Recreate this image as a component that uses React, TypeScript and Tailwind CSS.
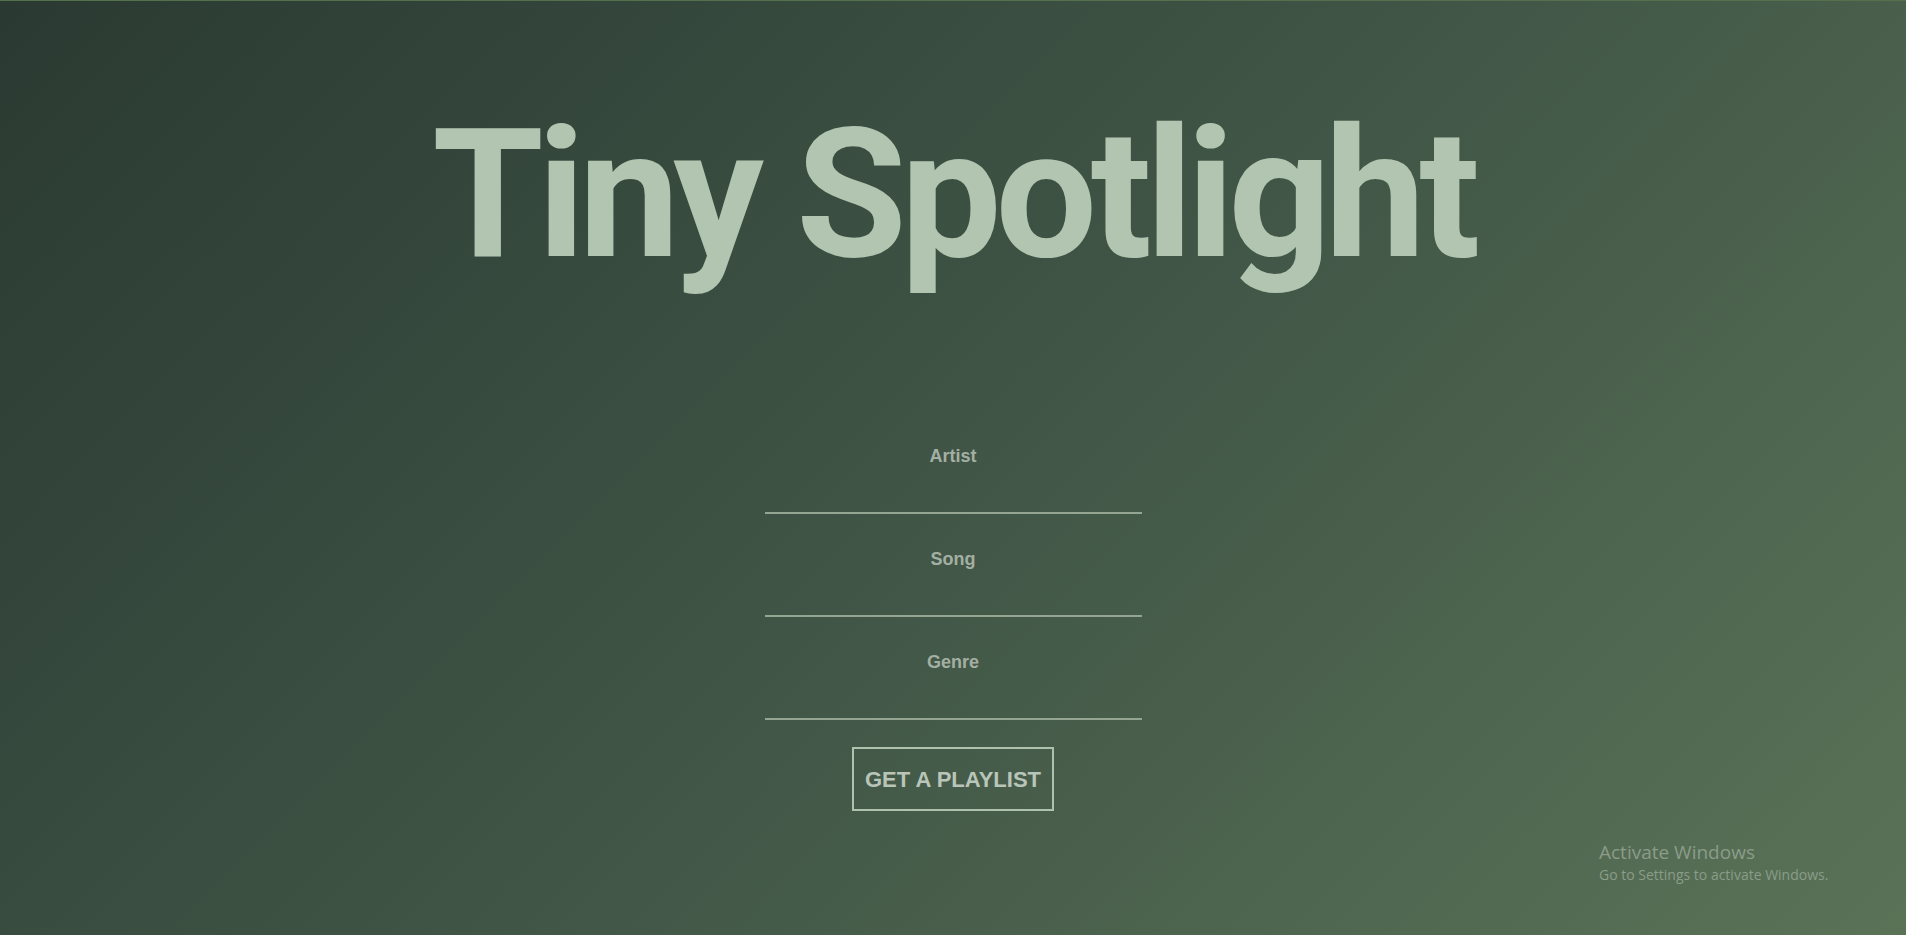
import { useState } from "react";

const fields = ["Artist", "Song", "Genre"] as const;

export default function App() {
  const [values, setValues] = useState<Record<string, string>>({
    Artist: "",
    Song: "",
    Genre: "",
  });

  return (
    <div className="relative min-h-screen w-full overflow-hidden border-t border-[#55704d] bg-[linear-gradient(135deg,#2a3a32_0%,#405546_50%,#5a7357_100%)] font-['Liberation_Sans',Arial,sans-serif]">
      <main className="flex flex-col items-center">
        <h1 className="mt-[104px] h-[180px] font-['Roboto',sans-serif] text-[180px] font-bold leading-none tracking-[-0.035em] text-[#b2c5b1]">
          Tiny Spotlight
        </h1>

        <form
          className="mt-[159px] flex w-[377px] flex-col items-center gap-[33px]"
          onSubmit={(e) => e.preventDefault()}
        >
          {fields.map((name) => (
            <label key={name} className="flex w-full flex-col items-center">
              <span className="h-6 text-[18px] font-bold leading-6 text-[#a3afa2]">
                {name}
              </span>
              <input
                type="text"
                name={name.toLowerCase()}
                value={values[name]}
                onChange={(e) =>
                  setValues((v) => ({ ...v, [name]: e.target.value }))
                }
                className="mt-[6px] h-[40px] w-full border-b-2 border-[#94a592] bg-transparent text-center text-[18px] text-[#c7d3c6] outline-none"
              />
            </label>
          ))}

          <button
            type="submit"
            className="-mt-[6px] h-[64px] w-[202px] border-2 border-[#afc2ad] text-[22px] font-bold text-[#b9c5b8]"
          >
            GET A PLAYLIST
          </button>
        </form>
      </main>

      <div className="pointer-events-none absolute left-[1599px] top-[838px] font-['Open_Sans','Noto_Sans',sans-serif] text-[#8b9c89]">
        <div className="text-[19px] leading-[26px]">Activate Windows</div>
        <div className="text-[14px] leading-[20px]">
          Go to Settings to activate Windows.
        </div>
      </div>
    </div>
  );
}
